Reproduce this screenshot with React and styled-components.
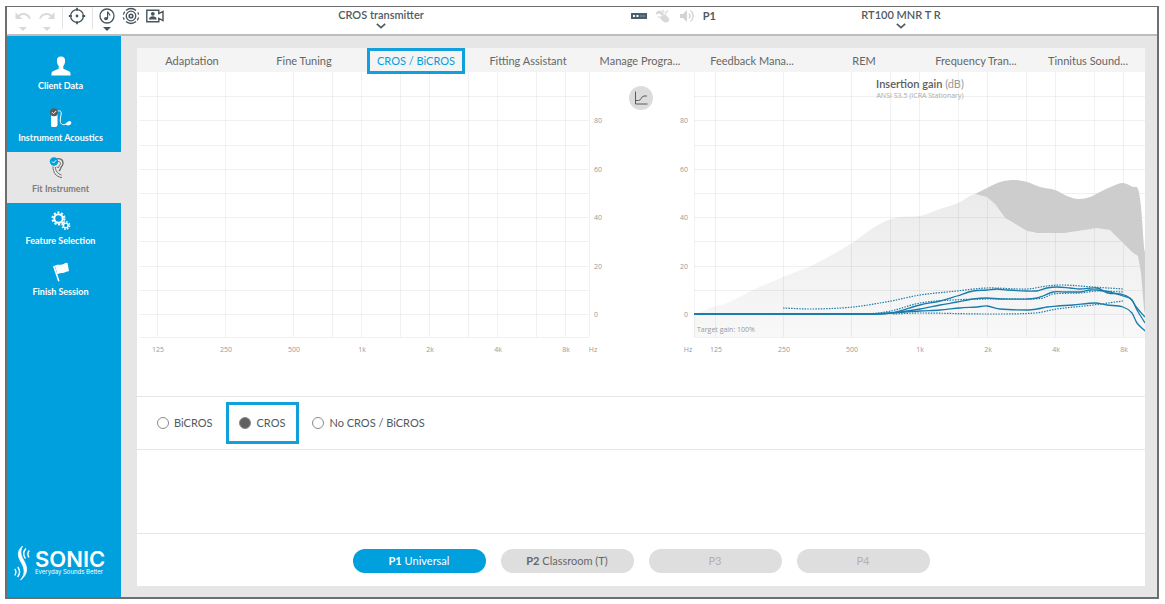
import React, { useState } from "react";
import styled, { createGlobalStyle } from "styled-components";
import { MdUndo, MdRedo } from "react-icons/md";

const GlobalStyle = createGlobalStyle`
  :root {
    --brand: #009fde;
    --panel: #e6e6e6;
    --ink: #4f5a61;
  }
  * {
    box-sizing: border-box;
  }
  body {
    margin: 0;
    background: #fff;
    color: var(--ink);
    font-family: Lato, "Open Sans", sans-serif;
    font-size: 11px;
    line-height: 16px;
  }
  button {
    font: inherit;
    color: inherit;
    border: none;
    background: none;
    padding: 0;
    cursor: pointer;
  }
`;

const tabs = [
  "Adaptation",
  "Fine Tuning",
  "CROS / BiCROS",
  "Fitting Assistant",
  "Manage Progra...",
  "Feedback Mana...",
  "REM",
  "Frequency Tran...",
  "Tinnitus Sound...",
];

const modes = ["BiCROS", "CROS", "No CROS / BiCROS"];

const programs = [
  { id: "P1", name: "Universal" },
  { id: "P2", name: "Classroom (T)" },
  { id: "P3", name: "" },
  { id: "P4", name: "" },
];

// chart geometry
const OCTAVE = 68;
const freqs = [
  [0, "125"],
  [1, "250"],
  [2, "500"],
  [2.58, ""],
  [3, "1k"],
  [3.58, ""],
  [4, "2k"],
  [4.58, ""],
  [5, "4k"],
  [5.58, ""],
  [6, "8k"],
];
const gains = [0, 20, 40, 60, 80];
const gainLines = [0, 10, 20, 30, 40, 50, 60, 70, 80, 90];
const gainY = (db) => Math.round(242 - db * 2.42) + 0.5;

const lightEdge = [
  [21, 242], [40, 235], [54, 231], [80, 218], [110, 205], [140, 193],
  [179, 171], [200, 156], [218, 147], [229, 145], [247, 144], [267, 137],
  [285, 131], [302, 122], [314, 125], [322, 132], [332, 146], [344, 153],
  [354, 159], [364, 161], [392, 161], [405, 159], [424, 156], [437, 158],
  [450, 171], [459, 180], [465, 184], [468, 201], [471, 238], [472, 242],
];
const darkEdge = [
  [302, 122], [314, 116], [327, 110], [342, 108], [354, 110], [367, 115],
  [382, 118], [394, 124], [405, 127], [417, 125], [427, 120], [440, 114],
  [450, 111], [460, 115], [465, 117], [468, 135], [471, 175], [472, 180],
];
const solidCurves = [
  [
    [21, 242], [190, 242], [218, 241], [247, 233], [267, 229], [284, 224],
    [300, 219], [314, 218], [324, 217], [334, 218], [354, 219], [364, 219],
    [374, 216], [384, 215], [397, 216], [407, 217], [424, 216], [435, 221],
    [447, 222], [457, 226], [464, 236], [472, 245],
  ],
  [
    [21, 242], [190, 242], [218, 241], [247, 237], [267, 233], [284, 230],
    [300, 227], [314, 226], [327, 227], [354, 227], [364, 226], [370, 224],
    [380, 220], [394, 220], [407, 220], [417, 218], [424, 218], [437, 220],
    [450, 224], [459, 228], [464, 238], [472, 251],
  ],
  [
    [21, 242], [190, 242], [218, 241], [247, 239], [267, 238], [287, 236],
    [304, 235], [314, 234], [327, 237], [354, 238], [364, 237], [374, 235],
    [384, 234], [400, 233], [422, 231], [434, 233], [450, 235], [459, 241],
    [464, 251], [472, 259],
  ],
];
const targetCurves = [
  [
    [110, 236], [140, 237], [180, 235], [218, 229], [247, 223], [284, 219],
    [314, 216], [354, 217], [374, 214], [390, 213], [420, 215], [450, 217],
  ],
  [
    [197, 242], [218, 239], [247, 231], [280, 228], [314, 227], [354, 227],
    [370, 226], [380, 222], [407, 221], [424, 219], [450, 220],
  ],
  [
    [220, 242], [247, 241], [314, 242], [362, 241], [384, 237], [420, 233],
    [450, 229],
  ],
];

// smooth path, with handles a third of each step long
const toPath = (pts) =>
  pts.reduce((d, [x, y], i) => {
    if (i === 0) return `M${x} ${y}`;
    const p0 = pts[i - 2] || pts[i - 1];
    const p1 = pts[i - 1];
    const p3 = pts[i + 1] || pts[i];
    const step = (x - p1[0]) / 3;
    const s1 = (y - p0[1]) / (x - p0[0]);
    // long flat runs stay flat
    const s2 = y === p1[1] ? 0 : (p3[1] - p1[1]) / (p3[0] - p1[0]);
    return `${d} C${p1[0] + step} ${p1[1] + s1 * step} ${x - step} ${
      y - s2 * step
    } ${x} ${y}`;
  }, "");

const CrosshairIcon = () => (
  <svg width="18" height="18" viewBox="0 0 18 18" fill="none" stroke="currentColor">
    <circle cx="9" cy="9" r="6.4" strokeWidth="1.3" />
    <path d="M9 .8v3M9 14.2v3M.8 9h3M14.2 9h3" strokeWidth="1.8" />
    <circle cx="9" cy="9" r="1.4" fill="currentColor" stroke="none" />
  </svg>
);

const MusicIcon = () => (
  <svg width="18" height="18" viewBox="0 0 18 18" fill="none" stroke="currentColor">
    <circle cx="9" cy="9" r="7" strokeWidth="1.3" />
    <path d="M9.6 11.6V4.6c.2 1.7 2.4 1.6 2.2 4" strokeWidth="1.2" />
    <ellipse cx="8" cy="11.6" rx="2" ry="1.6" fill="currentColor" stroke="none" />
  </svg>
);

const SurroundIcon = () => (
  <svg width="18" height="18" viewBox="0 0 18 18" fill="none" stroke="currentColor">
    <circle cx="9" cy="9" r="4.8" strokeWidth="1.3" />
    <circle cx="9" cy="9" r="1.8" strokeWidth="1.6" />
    <path
      d="M4 3.4A7.6 7.6 0 0 1 14 3.4M4 14.6A7.6 7.6 0 0 0 14 14.6M1.4 7.6A7.8 7.8 0 0 1 2.9 4.6M16.6 10.4A7.8 7.8 0 0 1 15.1 13.4M1.4 10.4A7.8 7.8 0 0 0 2.2 12.6M16.6 7.6A7.8 7.8 0 0 0 15.8 5.4"
      strokeWidth="1.3"
    />
  </svg>
);

const VideoIcon = () => (
  <svg width="18" height="18" viewBox="0 0 18 18" fill="none" stroke="currentColor">
    <path d="M.8 3.2h12v3.3l4.2-2.2v9.2l-4.2-2.2v3.4H.8z" strokeWidth="1.4" />
    <circle cx="6.8" cy="6.8" r="1.9" fill="currentColor" stroke="none" />
    <path d="M3 12.4c0-2.4 1.7-3.2 3.8-3.2s3.8.8 3.8 3.2z" fill="currentColor" stroke="none" />
  </svg>
);

const ChevronIcon = () => (
  <svg width="10" height="6" viewBox="0 0 10 6" fill="none" stroke="currentColor">
    <path d="M.8 .8l4.2 3.9L9.2 .8" strokeWidth="1.6" />
  </svg>
);

const DeviceIcon = () => (
  <svg width="16" height="16" viewBox="0 0 16 16">
    <rect y="5" width="16" height="6" fill="#4a5e6c" />
    <path d="M2 7h2v2H2zM5.5 7h2v2h-2z" fill="#fff" />
    <path d="M9 8h5" stroke="#8b99a3" />
  </svg>
);

const UnlinkedIcon = () => (
  <svg width="16" height="16" viewBox="0 0 16 16" fill="#d9d9d9">
    <path d="M1 4.5C2.5 2 5 1.8 7 3.5l2 2.8-1.8 1.5C5.5 5.5 3.5 5 1 6.5z" />
    <path d="M5.5 8.5L10 6l4.2 4.5-.7 3.5-4 .5L6 11.5z" />
    <path d="M7.5 1.5l1.5 3M12.8 2.5L10 5.5M3 8.5l3 1.5" stroke="#d9d9d9" strokeWidth="1.2" />
  </svg>
);

const SpeakerIcon = () => (
  <svg width="16" height="16" viewBox="0 0 16 16" fill="#d3d3d3">
    <path d="M1 6h3l4-4v12l-4-4H1z" />
    <path
      d="M10 5.5a3.5 3.5 0 0 1 0 5M11.5 2.5a7 7 0 0 1 0 11"
      fill="none"
      stroke="#d3d3d3"
      strokeWidth="1.3"
    />
  </svg>
);

const PersonIcon = () => (
  <svg width="20" height="20" viewBox="0 0 20 20" fill="#fff">
    <path d="M10 .5c3 0 4.3 2 4.1 4.8-.1 2.2-.9 3.7-1.8 4.8v2.3c.5 1.2 6.3 2 7 4.1.3 1 .3 2 .3 3H.4c0-1 0-2 .3-3 .7-2.1 6.5-2.9 7-4.1v-2.3C6.8 9 6 7.5 5.9 5.3 5.7 2.5 7 .5 10 .5z" />
  </svg>
);

const InstrumentIcon = () => (
  <svg width="24" height="20" viewBox="0 0 24 20">
    <path d="M2 5h6.5v11.5a2.5 2.5 0 0 1-2.5 2.5H3.5C2.6 19 2 18.4 2 17.5z" fill="#fff" />
    <path d="M8 3.5c2.500-1.500 4.200-.5 4.200 1.500 0 3-1.200 5-.9 8.500.3 3 3 4 6 2.500" fill="none" stroke="#fff" />
    <path d="M16.5 15.5l3-2.3c2-.5 3.3.8 2.7 2.3-.8 1.8-3.4 2.5-5 1.5z" fill="#fff" />
    <circle cx="5" cy="4.2" r="4" fill="#5c5c5c" />
    <path d="M3 4.2l1.5 1.5L7.2 3" fill="none" stroke="#fff" />
  </svg>
);

const EarIcon = () => (
  <svg width="26" height="22" viewBox="0 0 26 22" fill="none" stroke="#6b6b6b">
    <path
      d="M8.5 2.5C11 .8 15 2 15 6.2c0 2.3-1.5 3.1-2.2 4.6-.6 1.4-.4 2.7-2 3.2"
      strokeWidth="1.3"
    />
    <path d="M8.5 5.8C10 4 12.8 4.5 12.5 6.7c-.2 1.4-1.7 1.4-1.500 2.900.1 1.200-1.700 1.300-2.400.3" />
    <path d="M5 9.5c0 5.5 2.5 10.5 9 11M7.3 10c.3 4 2 6.5 6.200 8" />
    <circle cx="6" cy="4.5" r="4.2" fill="#009fde" stroke="none" />
    <path d="M4 4.5L5.5 6l2.7-2.8" stroke="#fff" />
  </svg>
);

const GearsIcon = () => (
  <svg width="20" height="20" viewBox="0 0 20 20" fill="none" stroke="#fff">
    <circle cx="7.5" cy="7.5" r="4.2" strokeWidth="2" />
    <circle cx="7.5" cy="7.5" r="6" strokeWidth="2" strokeDasharray="2.1 1.67" />
    <circle cx="14.8" cy="14.5" r="2.4" strokeWidth="1.4" />
    <circle cx="14.8" cy="14.5" r="3.8" strokeWidth="1.5" strokeDasharray="1.5 1.48" />
  </svg>
);

const FlagIcon = () => (
  <svg width="20" height="20" viewBox="0 0 20 20" fill="#fff">
    <path d="M2 4.2l1.5-.5L8.6 19l-1.5.5z" />
    <path d="M3.8 3.8C6.5 1.5 8.5 3.5 11 2.5c2.500-1 3.500-2 5.500-1.800l1.500 8.500c-2.500-.2-3.500 1.200-6 1.800-2 .4-3.500-.5-5.400 1.600z" />
  </svg>
);

const WaveLogo = () => (
  <svg width="18" height="36" viewBox="0 0 18 36" fill="none" stroke="#fff">
    <path d="M8.5 1C3 6 3.5 11 7 17c4 7 4.500 12-.5 18 8-6 7-13 3.500-19C7 10.500 5.500 7 8.500 1z" fill="#fff" strokeWidth=".8" />
    <path d="M12 3.5c-3 3-3 6.5-.5 10M15.3 5.500c-1.800 2-1.800 4.500-.3 7" strokeWidth="1.4" />
    <path d="M3.8 22c2.500 3.500 2.500 6.500-.2 10M.8 24c1.500 2 1.500 4 0 6.500" strokeWidth="1.4" />
  </svg>
);

const GraphIcon = () => (
  <svg width="16" height="16" viewBox="0 0 16 16" fill="none" stroke="#5a5a5a">
    <path d="M2.5 1.5v12.5H14.5" />
    <path d="M3 10.5h2.5c3 0 2.5-4.5 5.5-4.5H14" />
  </svg>
);

const Chart = ({ side }) => {
  const right = side === "right";
  const plotX = right ? 21 : 2;
  const plotEnd = right ? 472 : 452;
  const origin = right ? 42 : 20;
  return (
    <ChartSvg viewBox="0 0 472 290" role="img" aria-label={`${side} gain chart`}>
      {right && (
        <g>
          <defs>
            <linearGradient id="range" x1="0" y1="0" x2="0" y2="1">
              <stop offset="0" stopColor="#ebebeb" />
              <stop offset="1" stopColor="#f8f8f8" />
            </linearGradient>
          </defs>
          <path d={`${toPath(lightEdge)} V265 H21 Z`} fill="url(#range)" />
        </g>
      )}
      <g stroke="#000" strokeOpacity="0.055">
        {freqs.map(([oct]) => {
          const x = Math.round(origin + oct * OCTAVE) + 0.5;
          return <path key={oct} d={`M${x} 0V265`} />;
        })}
        {gainLines.map((db) => (
          <path key={db} d={`M${plotX} ${gainY(db)}H${plotEnd}`} />
        ))}
        <path d={`M${plotX} 265.5H${plotEnd}`} />
        <path d={`M${right ? plotX : plotEnd}.5 0V265`} />
      </g>
      {right && (
        <g fill="none">
          <path
            d={`${toPath(darkEdge)} V242 L${lightEdge
              .slice(13)
              .reverse()
              .map((p) => p.join(" "))
              .join(" L")} Z`}
            fill="#cdcdcd"
          />
          {solidCurves.map((c, i) => (
            <path key={i} d={toPath(c)} stroke="#1a7cab" strokeWidth="1.3" />
          ))}
          {targetCurves.map((c, i) => (
            <path
              key={i}
              d={toPath(c)}
              stroke="#1a7cab"
              strokeWidth="1.2"
              strokeDasharray="1.5 1.2"
            />
          ))}
        </g>
      )}
      <AxisText>
        {gains.map((db) => (
          <text key={db} x={right ? 15 : 457} y={gainY(db) + 2} textAnchor={right ? "end" : "start"}>
            {db}
          </text>
        ))}
        {freqs.map(
          ([oct, label]) =>
            label && (
              <text key={oct} x={origin + 1 + oct * OCTAVE} y="280" textAnchor="middle">
                {label}
              </text>
            )
        )}
        <text x={right ? 15 : 456} y="280" textAnchor="middle">
          Hz
        </text>
        {right && (
          <text x="24" y="260">
            Target gain: 100%
          </text>
        )}
      </AxisText>
      {right && (
        <g>
          <ChartTitle x="247" y="16">
            Insertion gain <tspan>(dB)</tspan>
          </ChartTitle>
          <ChartNote x="247" y="26">
            ANSI S3.5 (ICRA Stationary)
          </ChartNote>
        </g>
      )}
    </ChartSvg>
  );
};

const steps = [
  { label: "Client Data", Icon: PersonIcon },
  { label: "Instrument Acoustics", Icon: InstrumentIcon },
  { label: "Fit Instrument", Icon: EarIcon },
  { label: "Feature Selection", Icon: GearsIcon },
  { label: "Finish Session", Icon: FlagIcon },
];

const App = () => {
  const [tab, setTab] = useState("CROS / BiCROS");
  const [mode, setMode] = useState("CROS");
  const [program, setProgram] = useState("P1");
  const [step, setStep] = useState("Fit Instrument");

  return (
    <Page>
      <GlobalStyle />
      <Window>
        <Toolbar>
          <Tools>
            <Tool $faded aria-label="Undo">
              <MdUndo size={18} />
              <Caret />
            </Tool>
            <Tool $faded aria-label="Redo">
              <MdRedo size={18} />
              <Caret />
            </Tool>
            <Divider />
            <Tool aria-label="Target">
              <CrosshairIcon />
            </Tool>
            <Divider />
            <Tool aria-label="Sound">
              <MusicIcon />
              <Caret />
            </Tool>
            <Tool aria-label="Surround">
              <SurroundIcon />
            </Tool>
            <Tool aria-label="Video call">
              <VideoIcon />
            </Tool>
          </Tools>
          <DeviceButton>
            CROS transmitter
            <ChevronIcon />
          </DeviceButton>
          <Status>
            <DeviceIcon />
            <UnlinkedIcon />
            <SpeakerIcon />
            <b>P1</b>
          </Status>
          <DeviceButton>
            RT100 MNR T R
            <ChevronIcon />
          </DeviceButton>
        </Toolbar>
        <Body>
          <Sidebar>
            <StepList>
              {steps.map(({ label, Icon }) => (
                <Step key={label} $active={label === step} onClick={() => setStep(label)}>
                  <Icon />
                  {label}
                </Step>
              ))}
            </StepList>
            <Brand>
              <WaveLogo />
              <div>
                <BrandName>SONIC</BrandName>
                <BrandLine>Everyday Sounds Better</BrandLine>
              </div>
            </Brand>
          </Sidebar>
          <Main>
            <Card>
              <TabBar>
                {tabs.map((name) => (
                  <Tab key={name} $active={name === tab} onClick={() => setTab(name)}>
                    {name}
                  </Tab>
                ))}
              </TabBar>
              <Charts>
                <Chart side="left" />
                <GraphButton aria-label="Graph settings">
                  <GraphIcon />
                </GraphButton>
                <Chart side="right" />
              </Charts>
              <ModeRow>
                {modes.map((name) => (
                  <Mode key={name} $active={name === mode}>
                    <input
                      type="radio"
                      name="mode"
                      checked={name === mode}
                      onChange={() => setMode(name)}
                    />
                    {name}
                  </Mode>
                ))}
              </ModeRow>
              <Filler />
              <Programs>
                {programs.map(({ id, name }) => (
                  <Program
                    key={id}
                    $active={id === program}
                    disabled={!name}
                    onClick={() => setProgram(id)}
                  >
                    {name ? <b>{id}</b> : id} {name}
                  </Program>
                ))}
              </Programs>
            </Card>
          </Main>
        </Body>
      </Window>
    </Page>
  );
};

const Page = styled.div`
  display: flex;
  min-height: 100vh;
  padding: 6px 6px 5px 5px;
`;

const Window = styled.div`
  flex: 1;
  display: flex;
  flex-direction: column;
  border: 1px solid #6e6e6e;
  border-width: 1px 2px 2px 2px;
`;

const Toolbar = styled.header`
  display: grid;
  grid-template-columns: 194px 1fr 160px 1fr 76px;
  height: 29px;
  border-bottom: 2px solid #bdbdbd;
`;

const Tools = styled.div`
  display: flex;
  padding-left: 4px;
`;

const Tool = styled.button`
  display: flex;
  flex-direction: column;
  align-items: center;
  width: 24px;
  color: ${({ $faded }) => ($faded ? "#d9d9d9" : "#46545e")};
`;

const Caret = styled.span`
  margin-top: 2px;
  border: 4px solid transparent;
  border-top-color: currentColor;
  border-bottom: none;
`;

const Divider = styled.span`
  width: 1px;
  height: 22px;
  margin: 0 2px 0 3px;
  background: #e3e3e3;
`;

const DeviceButton = styled.button`
  display: flex;
  flex-direction: column;
  align-items: center;
  font-weight: 600;
`;

const Status = styled.div`
  display: flex;
  align-items: flex-start;
  justify-content: flex-end;
  gap: 8px;
  padding: 1px 5px 0 0;
`;

const Body = styled.div`
  flex: 1;
  display: flex;
`;

const Sidebar = styled.nav`
  display: flex;
  flex-direction: column;
  justify-content: space-between;
  width: 114px;
  padding: 13px 0 16px;
  background: var(--brand);
`;

const StepList = styled.div`
  display: flex;
  flex-direction: column;
  height: 257px;
`;

const Step = styled.button`
  flex: 1;
  display: flex;
  flex-direction: column;
  align-items: center;
  justify-content: flex-end;
  gap: 2px;
  padding: 0 7px 6px 0;
  font-size: 9px;
  font-weight: 700;
  white-space: nowrap;
  color: ${({ $active }) => ($active ? "#7d7d7d" : "#fff")};
  background: ${({ $active }) => ($active ? "var(--panel)" : "none")};
`;

const Brand = styled.div`
  display: flex;
  align-items: center;
  gap: 3px;
  padding-left: 7px;
  color: #fff;
`;

const BrandName = styled.div`
  font-family: Inter, sans-serif;
  font-size: 22px;
  font-weight: 600;
  line-height: 18px;
`;

const BrandLine = styled.div`
  font-family: Inter, sans-serif;
  font-size: 6px;
  line-height: 8px;
`;

const Main = styled.main`
  flex: 1;
  display: flex;
  padding: 12px 12px 11px 16px;
  background: var(--panel);
`;

const Card = styled.div`
  flex: 1;
  display: flex;
  flex-direction: column;
  background: #fff;
`;

const TabBar = styled.div`
  display: flex;
  height: 24px;
  background: #f4f4f4;
`;

const Tab = styled.button`
  flex: 1;
  height: 26px;
  margin: 0 8px 0 6px;
  color: ${({ $active }) => ($active ? "var(--brand)" : "#666")};
  border: 3px solid ${({ $active }) => ($active ? "#12a0dc" : "transparent")};
  white-space: nowrap;
`;

const Charts = styled.div`
  display: grid;
  grid-template-columns: 1fr 64px 1fr;
  align-items: start;
  justify-items: center;
  padding-bottom: 34px;
`;

const ChartSvg = styled.svg`
  display: block;
  width: 100%;
`;

const AxisText = styled.g`
  font-family: "Open Sans", sans-serif;
  font-size: 7px;
  fill: #999;
`;

const ChartTitle = styled.text`
  font-size: 11px;
  font-weight: 600;
  fill: #5c5c5c;
  text-anchor: middle;
  tspan {
    font-weight: 400;
    fill: #999;
  }
`;

const ChartNote = styled.text`
  font-family: "Open Sans", sans-serif;
  font-size: 7px;
  fill: #aaa;
  text-anchor: middle;
`;

const GraphButton = styled.button`
  display: grid;
  place-items: center;
  width: 24px;
  height: 24px;
  margin-top: 14px;
  border-radius: 50%;
  background: #dcdcdc;
`;

const ModeRow = styled.div`
  display: flex;
  align-items: center;
  height: 54px;
  padding-left: 7px;
  border: 1px solid #e6e6e6;
  border-width: 1px 0;
`;

const Mode = styled.label`
  display: flex;
  align-items: center;
  gap: 5px;
  height: 42px;
  padding: 0 11px 0 10px;
  border: 3px solid ${({ $active }) => ($active ? "#12a0dc" : "transparent")};
  input {
    appearance: none;
    width: 12px;
    height: 12px;
    margin: 0;
    border: 1px solid #8a8a8a;
    border-radius: 50%;
  }
  input:checked {
    background: #606060;
  }
`;

const Filler = styled.div`
  flex: 1;
`;

const Programs = styled.div`
  display: flex;
  justify-content: center;
  gap: 15px;
  padding: 15px 0 13px;
  border-top: 1px solid #e6e6e6;
`;

const Program = styled.button`
  width: 133px;
  height: 24px;
  border-radius: 12px;
  color: ${({ $active }) => ($active ? "#fff" : "#666")};
  background: ${({ $active }) => ($active ? "var(--brand)" : "#dedede")};
  &:disabled {
    color: #b0b0b0;
  }
`;

export default App;
